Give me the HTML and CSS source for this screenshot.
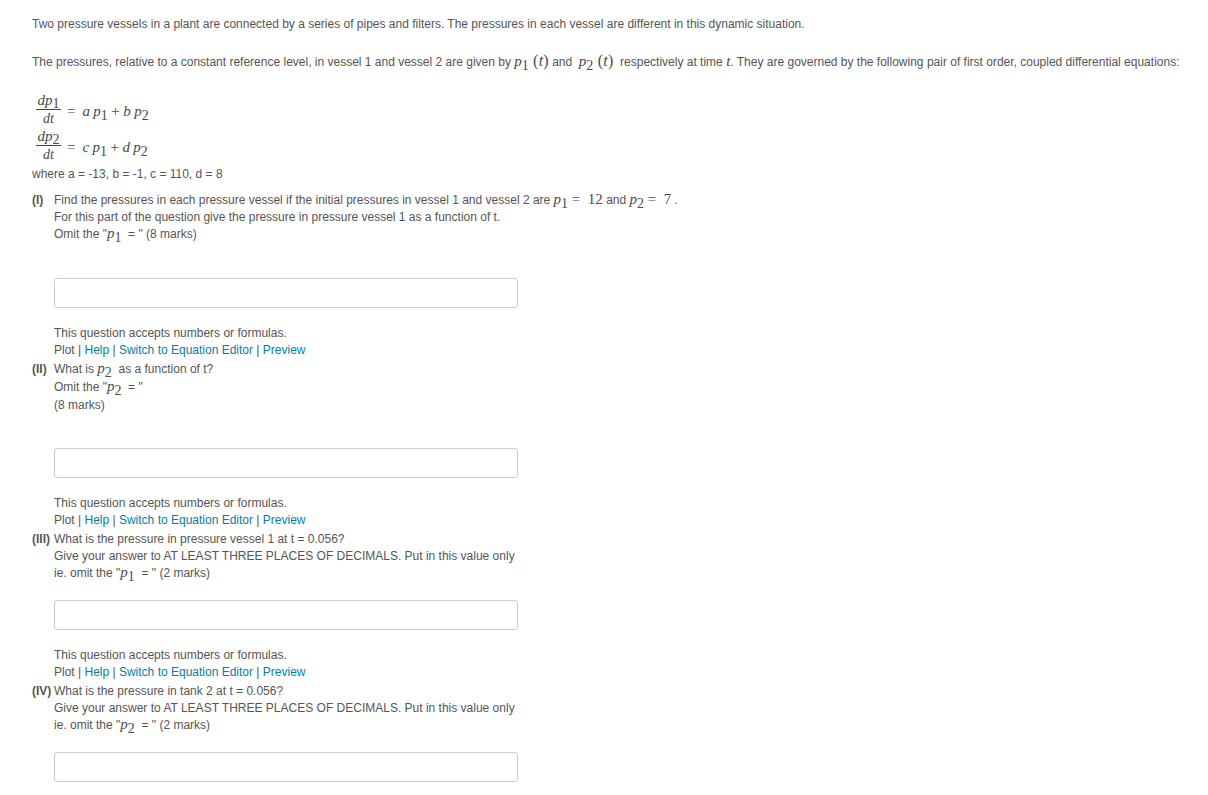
FILE: index.html
```html
<html>
<head>
	<title>Pressure vessels question</title>
	<link rel="stylesheet" href="styles.css">
</head>

<body>
<div class="body">
	<div class="intro">Two pressure vessels in a plant are connected by a series of pipes and filters. The pressures in each vessel are different in this dynamic situation.</div>
	<div class="intro second">The pressures, relative to a constant reference level, in vessel 1 and vessel 2 are given by <span class="m"><i>p</i><sub>1</sub></span> <span class="m paren">(<i>t</i>)</span> and &nbsp;<span class="m"><i>p</i><sub>2</sub></span> <span class="m paren">(<i>t</i>)</span> &nbsp;respectively at time <span class="m"><i>t</i></span>. They are governed by the following pair of first order, coupled differential equations:</div>

	<div class="equations">
		<div class="eq">
			<div class="frac"><div class="top"><i>dp</i><sub>1</sub></div><div class="bottom"><i>dt</i></div></div>
			<div class="m rhs">= &nbsp;<i>a</i> <i>p</i><sub>1</sub> + <i>b</i> <i>p</i><sub>2</sub></div>
		</div>
		<div class="eq">
			<div class="frac"><div class="top"><i>dp</i><sub>2</sub></div><div class="bottom"><i>dt</i></div></div>
			<div class="m rhs">= &nbsp;<i>c</i> <i>p</i><sub>1</sub> + <i>d</i> <i>p</i><sub>2</sub></div>
		</div>
	</div>
	<div class="where">where a = -13, b = -1, c = 110, d = 8</div>

	<div class="part first">
		<div class="num">(I)</div>
		<div class="text">
			<div class="line">Find the pressures in each pressure vessel if the initial pressures in vessel 1 and vessel 2 are <span class="m"><i>p</i><sub>1</sub> = &nbsp;12</span> and <span class="m"><i>p</i><sub>2</sub> = &nbsp;7</span> .</div>
			<div class="line">For this part of the question give the pressure in pressure vessel 1 as a function of t.</div>
			<div class="line">Omit the "<span class="m"><i>p</i><sub>1</sub></span> &nbsp;= " (8 marks)</div>
		</div>
	</div>
	<div class="answer tall"><input type="text"></div>
	<div class="hint">
		<div class="line">This question accepts numbers or formulas.</div>
		<div class="line">Plot | <a href="#">Help</a> | <a href="#">Switch to Equation Editor</a> | <a href="#">Preview</a></div>
	</div>

	<div class="part loose">
		<div class="num">(II)</div>
		<div class="text">
			<div class="line">What is <span class="m"><i>p</i><sub>2</sub></span> &nbsp;as a function of t?</div>
			<div class="line">Omit the "<span class="m"><i>p</i><sub>2</sub></span> &nbsp;= "</div>
			<div class="line">(8 marks)</div>
		</div>
	</div>
	<div class="answer short"><input type="text"></div>
	<div class="hint">
		<div class="line">This question accepts numbers or formulas.</div>
		<div class="line">Plot | <a href="#">Help</a> | <a href="#">Switch to Equation Editor</a> | <a href="#">Preview</a></div>
	</div>

	<div class="part">
		<div class="num">(III)</div>
		<div class="text">
			<div class="line">What is the pressure in pressure vessel 1 at t = 0.056?</div>
			<div class="line">Give your answer to AT LEAST THREE PLACES OF DECIMALS. Put in this value only</div>
			<div class="line">ie. omit the "<span class="m"><i>p</i><sub>1</sub></span> &nbsp;= " (2 marks)</div>
		</div>
	</div>
	<div class="answer"><input type="text"></div>
	<div class="hint">
		<div class="line">This question accepts numbers or formulas.</div>
		<div class="line">Plot | <a href="#">Help</a> | <a href="#">Switch to Equation Editor</a> | <a href="#">Preview</a></div>
	</div>

	<div class="part">
		<div class="num">(IV)</div>
		<div class="text">
			<div class="line">What is the pressure in tank 2 at t = 0.056?</div>
			<div class="line">Give your answer to AT LEAST THREE PLACES OF DECIMALS. Put in this value only</div>
			<div class="line">ie. omit the "<span class="m"><i>p</i><sub>2</sub></span> &nbsp;= " (2 marks)</div>
		</div>
	</div>
	<div class="answer"><input type="text"></div>
</div>
</body>
</html>
```
FILE: styles.css
```css
html, body {margin: 0; padding: 0; background: #fff; overflow: hidden;}
div.body {padding: 16px 0 0 32px; height: 779px; font: 12px/17px "Liberation Sans", Arial, sans-serif; color: #555;}
div.intro {height: 17px; white-space: nowrap;}
div.second {margin-top: 21px;}
.m {font-family: "Liberation Serif", serif; font-size: 15px; line-height: 0; color: #4a4a4a;}
.m sub {font-size: 14px; line-height: 0; vertical-align: -4px;}
.paren {font-size: 16px; letter-spacing: 0.2px; margin-left: 1px;}
div.equations {margin-top: 20px;}
div.eq {display: flex; align-items: center; height: 36px;}
div.frac {width: 25px; text-align: center; margin-left: 4px; font: 15px/15px "Liberation Serif", serif; color: #4a4a4a;}
div.frac sub {font-size: 14px; line-height: 0; vertical-align: -3px;}
div.top {border-bottom: 1px solid #444; padding-bottom: 1px;}
div.bottom {padding-top: 1px; font-size: 14px;}
div.m.rhs {margin-left: 6px; padding-top: 4px; line-height: 17px; white-space: nowrap; word-spacing: -0.3px;}
div.where {margin-top: 3px;}
div.part {display: flex; margin-top: 2px;}
div.part.first {margin-top: 9px;}
div.num {width: 22px; font-weight: bold; white-space: nowrap;}
div.line {height: 17px; white-space: nowrap;}
div.loose div.line {height: 18px;}
div.answer {margin: 18px 0 0 22px;}
div.answer.tall {margin-top: 35px;}
div.answer.short {margin-top: 33px;}
div.answer input {display: block; box-sizing: border-box; width: 464px; height: 30px; border: 1px solid #ccc; border-radius: 3px; background: #fff; margin: 0; padding: 0;}
div.hint {margin: 17px 0 0 22px;}
a {color: #007fa3; text-decoration: none;}
```
